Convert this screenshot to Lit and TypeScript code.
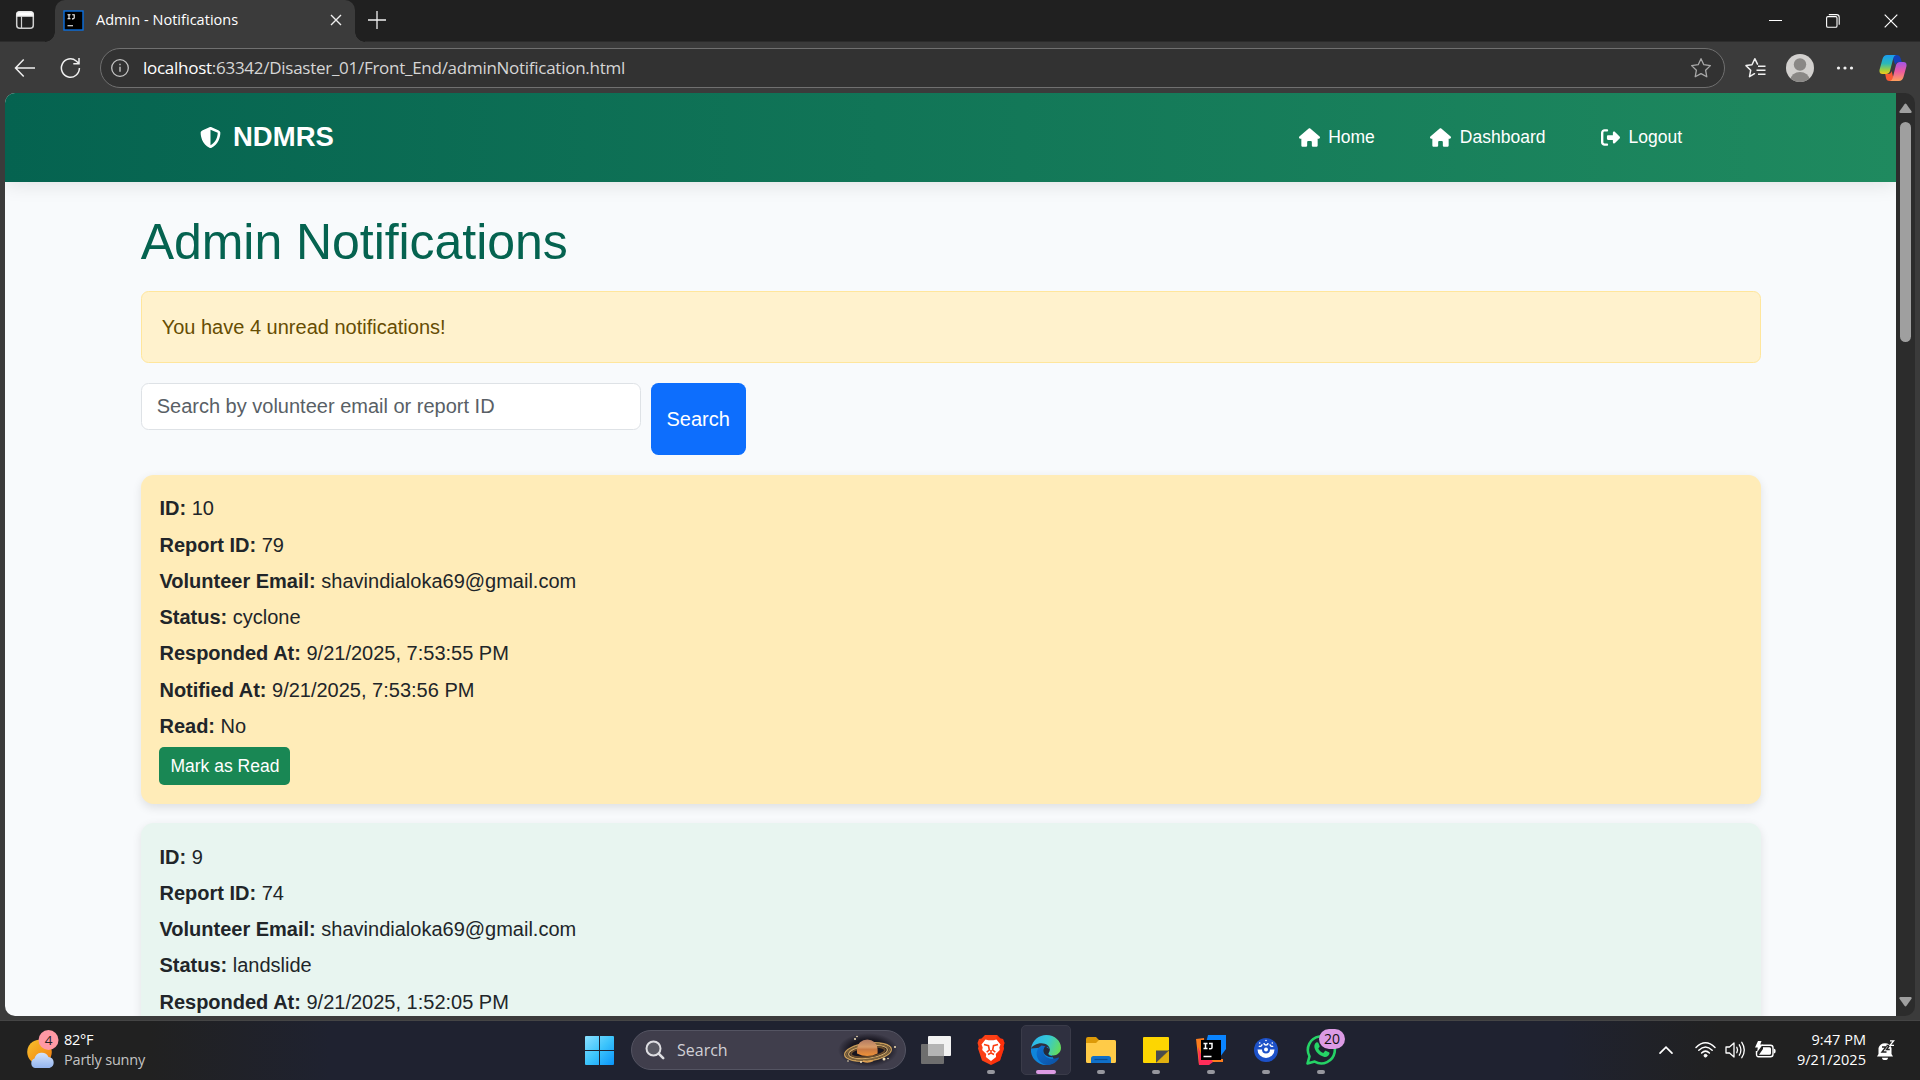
import { LitElement, html, svg, css } from "lit";
import { customElement, property } from "lit/decorators.js";

interface Notice {
  unread: boolean;
  fields: [string, string][];
}

const NOTICES: Notice[] = [
  {
    unread: true,
    fields: [
      ["ID:", "10"],
      ["Report ID:", "79"],
      ["Volunteer Email:", "shavindialoka69@gmail.com"],
      ["Status:", "cyclone"],
      ["Responded At:", "9/21/2025, 7:53:55 PM"],
      ["Notified At:", "9/21/2025, 7:53:56 PM"],
      ["Read:", "No"],
    ],
  },
  {
    unread: false,
    fields: [
      ["ID:", "9"],
      ["Report ID:", "74"],
      ["Volunteer Email:", "shavindialoka69@gmail.com"],
      ["Status:", "landslide"],
      ["Responded At:", "9/21/2025, 1:52:05 PM"],
    ],
  },
];

const HOUSE =
  "M575.8 255.5c0 18-15 32.1-32 32.1l-32 0 .7 160.2c0 2.7-.2 5.4-.5 8.1l0 16.2c0 22.1-17.9 40-40 40l-16 0c-1.1 0-2.2 0-3.3-.1c-1.4 .1-2.8 .1-4.2 .1L416 512l-24 0c-22.1 0-40-17.9-40-40l0-24 0-64c0-17.7-14.3-32-32-32l-64 0c-17.7 0-32 14.3-32 32l0 64 0 24c0 22.1-17.9 40-40 40l-24 0-31.9 0c-1.5 0-3-.1-4.5-.2c-1.2 .1-2.4 .2-3.6 .2l-16 0c-22.1 0-40-17.9-40-40l0-112c0-.9 0-1.9 .1-2.8l0-69.7-32 0c-18 0-32-14-32-32.1c0-9 3-17 10-24L266.4 8c7-7 15-8 22-8s15 2 21 7L564.8 231.5c8 7 12 15 11 24z";
const SHIELD =
  "M256 0c4.6 0 9.2 1 13.4 2.9L457.7 82.8c22 9.3 38.4 31 38.3 57.2c-.5 99.2-41.3 280.7-213.6 363.2c-16.7 8-36.1 8-52.8 0C57.3 420.7 16.5 239.2 16 140c-.1-26.2 16.3-47.9 38.3-57.2L242.7 2.9C246.8 1 251.4 0 256 0zm0 66.8l0 378.1C394 378 431.1 230.1 432 141.4L256 66.8z";
const LOGOUT =
  "M377.9 105.9L500.7 228.7c7.2 7.2 11.3 17.1 11.3 27.3s-4.1 20.1-11.3 27.3L377.9 406.1c-6.4 6.4-15 9.9-24 9.9c-18.7 0-33.9-15.2-33.9-33.9l0-62.1-128 0c-17.7 0-32-14.3-32-32l0-64c0-17.7 14.3-32 32-32l128 0 0-62.1c0-18.7 15.2-33.9 33.9-33.9c9 0 17.6 3.6 24 9.9zM160 96L96 96c-17.7 0-32 14.3-32 32l0 256c0 17.7 14.3 32 32 32l64 0c17.7 0 32 14.3 32 32s-14.3 32-32 32l-64 0c-53 0-96-43-96-96L0 128C0 75 43 32 96 32l64 0c17.7 0 32 14.3 32 32s-14.3 32-32 32z";

@customElement("browser-chrome")
class BrowserChrome extends LitElement {
  static styles = css`
    :host {
      display: block;
      height: 93px;
      background: #3b3b3b;
      color: #fff;
      font-family: "Open Sans", "Noto Sans", sans-serif;
    }
    svg {
      display: block;
      flex: none;
      fill: none;
      stroke: #f0f0f0;
      stroke-width: 1.5;
    }
    .strip {
      height: 42px;
      display: flex;
      align-items: stretch;
      background: #202020;
      box-sizing: border-box;
      border-bottom: 1px solid #2c2c2c;
    }
    .panel {
      width: 55px;
      display: flex;
      align-items: center;
      padding: 0 0 2px 15px;
      box-sizing: border-box;
    }
    .tab {
      position: relative;
      width: 300px;
      height: 42px;
      box-sizing: border-box;
      padding: 0 13px 2px 8px;
      display: flex;
      align-items: center;
      background: #3b3b3b;
      border-radius: 10px 10px 0 0;
    }
    .tab::before,
    .tab::after {
      content: "";
      position: absolute;
      bottom: 0;
      width: 10px;
      height: 10px;
    }
    .tab::before {
      left: -10px;
      background: radial-gradient(circle at 0 0, #202020 9.5px, #3b3b3b 10px);
    }
    .tab::after {
      right: -10px;
      background: radial-gradient(circle at 100% 0, #202020 9.5px, #3b3b3b 10px);
    }
    .title {
      flex: 1;
      margin-left: 12px;
      padding-bottom: 1px;
      font-size: 14.5px;
      letter-spacing: 0.03px;
      white-space: nowrap;
    }
    .plus {
      margin: 11px 0 0 13px;
    }
    .window {
      margin-left: auto;
      display: flex;
      align-items: center;
      gap: 44px;
      padding: 1px 22px 0 0;
    }
    .bar {
      height: 51px;
      display: flex;
      align-items: center;
      box-sizing: border-box;
      padding: 0 13px 0 14px;
    }
    .refresh {
      margin: 0 19px 0 24px;
    }
    .address {
      width: 1625px;
      height: 40px;
      box-sizing: border-box;
      border: 1px solid #707070;
      border-radius: 20px;
      background: #323232;
      display: flex;
      align-items: center;
      padding: 0 12px 0 9px;
    }
    .url {
      flex: 1;
      margin-left: 13px;
      font-size: 17px;
      letter-spacing: -0.27px;
      color: #d6d6d6;
      white-space: nowrap;
    }
    .url b {
      font-weight: 400;
      color: #fff;
    }
    .fav {
      margin: 0 20px 0 19px;
    }
    .dots {
      margin: 0 25px 0 22px;
    }
  `;

  render() {
    return html`
      <div class="strip">
        <div class="panel">
          <svg width="20" height="20" viewBox="0 0 20 20">
            <rect x="1.7" y="1.7" width="16.6" height="16.6" rx="3" stroke="#cfcfcf" />
            <path d="M2 4.2A2.5 2.5 0 0 1 4.5 2h11A2.5 2.5 0 0 1 18 4.2V6H2z" fill="#fff" />
            <path d="M6.5 6v12" stroke="#cfcfcf" stroke-width="1.2" />
          </svg>
        </div>
        <div class="tab">
          <svg width="21" height="21" viewBox="0 0 21 21">
            <rect x="1" y="1" width="19" height="19" fill="#000" stroke="#0a6fe0" stroke-width="1.4" />
            <path d="M4.5 4.7h3M6 4.7v4M4.5 8.7h3M9.2 4.7h2v3q0 1.2-1.4 1.2H9M4.5 15.7h5.5" stroke="#fff" stroke-width="1.1" />
          </svg>
          <span class="title">Admin - Notifications</span>
          <svg width="12" height="12" viewBox="0 0 12 12"><path d="M1 1l10 10M11 1L1 11" stroke-width="1.4" /></svg>
        </div>
        <svg class="plus" width="18" height="18" viewBox="0 0 18 18"><path d="M9 0v18M0 9h18" stroke-width="1.3" /></svg>
        <div class="window">
          <svg width="13" height="14" viewBox="0 0 13 14"><path d="M0 6.5h13" stroke="#fff" stroke-width="1" /></svg>
          <svg width="14" height="14" viewBox="0 0 14 14">
            <rect x=".6" y="2.6" width="10.4" height="10.6" rx="1.3" stroke="#fff" stroke-width="1.1" />
            <path d="M2.8.6h7.7q2.7 0 2.7 2.6v7.5" stroke="#fff" stroke-width="1.1" />
          </svg>
          <svg width="14" height="14" viewBox="0 0 14 14"><path d="M.7.7l12.6 12.6M13.3.7L.7 13.3" stroke="#fff" stroke-width="1.2" /></svg>
        </div>
      </div>
      <div class="bar">
        <svg width="22" height="20" viewBox="0 0 22 20"><path d="M9.7 1.5L1.5 10l8.2 8.5M1.7 10H21" /></svg>
        <svg class="refresh" width="21" height="22" viewBox="0 0 21 22">
          <path d="M19.4 11a9 9.2 0 1 1-3.2-7L19 6.5M19 1v5.7h-5.7" />
        </svg>
        <div class="address">
          <svg width="20" height="20" viewBox="0 0 20 20">
            <circle cx="10" cy="10" r="8.3" stroke="#c4c4c4" stroke-width="1.3" />
            <path d="M10 8.8v5M10 5.8v1.5" stroke="#c4c4c4" stroke-width="1.4" />
          </svg>
          <span class="url"><b>localhost</b>:63342/Disaster_01/Front_End/adminNotification.html</span>
          <svg width="22" height="22" viewBox="0 0 22 22">
            <path d="M11 1.7l2.8 6 6.6.9-4.8 4.6 1.2 6.6L11 16.6l-5.8 3.2 1.2-6.6L1.6 8.600l6.6-.9z" stroke="#a8a8a8" stroke-width="1.3" stroke-linejoin="round" />
          </svg>
        </div>
        <svg class="fav" width="22" height="22" viewBox="0 0 22 22">
          <path d="M10.500 16.700l-5 3 1.200-6.500L2 8.600l6-.9 2.800-6 2.700 5.500" stroke-linejoin="round" stroke-linecap="round" />
          <path d="M14 9.300h7.500M12.500 13.300h9M14 17.300h7.500" />
        </svg>
        <svg width="28" height="28" viewBox="0 0 28 28" stroke="none">
          <defs><clipPath id="face"><circle cx="14" cy="14" r="14" /></clipPath></defs>
          <g clip-path="url(#face)" stroke="none">
            <rect width="28" height="28" fill="#d2d0ce" />
            <circle cx="14" cy="10.500" r="6.200" fill="#8a8886" />
            <ellipse cx="14" cy="26" rx="9.500" ry="8" fill="#8a8886" />
          </g>
        </svg>
        <svg class="dots" width="18" height="6" viewBox="0 0 18 6">
          <g fill="#f0f0f0" stroke="none"><circle cx="2.500" cy="3" r="1.600" /><circle cx="9" cy="3" r="1.600" /><circle cx="15.500" cy="3" r="1.600" /></g>
        </svg>
        <svg width="28" height="28" viewBox="0 0 28 28">
          <defs>
            <linearGradient id="cpA" x1="0" y1="0" x2="0" y2="1">
              <stop offset="0" stop-color="#1a9cf0" /><stop offset=".45" stop-color="#2bb8b8" /><stop offset=".8" stop-color="#a5cf3a" /><stop offset="1" stop-color="#f4c81c" />
            </linearGradient>
            <linearGradient id="cpB" x1="0" y1="0" x2="0" y2="1">
              <stop offset="0" stop-color="#a155e8" /><stop offset=".5" stop-color="#ec5aa0" /><stop offset="1" stop-color="#ffa05c" />
            </linearGradient>
          </defs>
          <g stroke="none">
            <path d="M13 1h4.500q3 0 4 3l1.300 4h-3q-2.700 0-3.600 3z" fill="#1340b8" />
            <path d="M15 27h-4.500q-3 0-3.500-3l-.8-4h3q2.700 0 3.500-3z" fill="#f85a34" />
            <path d="M8 1h9q-2 .6-2.700 3L11 17q-1 3-4 3H3.500Q-.2 20 .6 15.500L3.500 5Q4.700 1 8 1z" fill="url(#cpA)" />
            <path d="M20 27h-9q2-.6 2.700-3L17 11q1-3 4-3h3.500q3.700 0 2.900 4.500L24.500 23q-1.200 4-4.500 4z" fill="url(#cpB)" />
          </g>
        </svg>
      </div>
    `;
  }
}

@customElement("notice-card")
class NoticeCard extends LitElement {
  @property({ attribute: false }) notice!: Notice;

  static styles = css`
    :host {
      display: block;
      margin-bottom: 18.75px;
    }
    .card {
      padding: 18.75px;
      border-radius: 12.500px;
      background: #e8f5f0;
      box-shadow: 0 3.750px 10px rgba(0, 0, 0, 0.1);
    }
    .card.unread {
      background: #ffecb8;
    }
    p {
      margin: 0 0 6.250px;
      line-height: 30px;
    }
    button {
      display: block;
      height: 38.250px;
      padding: 0 11px;
      border: 0;
      border-radius: 5px;
      background: #198754;
      color: #fff;
      font: 17.500px/37.500px "Liberation Sans", Arial, sans-serif;
    }
  `;

  render() {
    const { unread, fields } = this.notice;
    return html`
      <div class="card ${unread ? "unread" : ""}">
        ${fields.map(([label, value]) => html`<p><strong>${label}</strong> ${value}</p>`)}
        ${unread ? html`<button>Mark as Read</button>` : ""}
      </div>
    `;
  }
}

@customElement("admin-page")
class AdminPage extends LitElement {
  static styles = css`
    :host {
      display: flex;
      height: 923px;
      margin: 0 5px;
      overflow: hidden;
      border-radius: 10px;
      background: #2c2c2c;
      font: 20px/30px "Liberation Sans", Arial, sans-serif;
      color: #212529;
    }
    .view {
      width: 1891px;
      height: 923px;
      overflow: hidden;
      background: #f8fafc;
    }
    nav {
      position: relative;
      height: 89px;
      box-sizing: border-box;
      padding: 0 214px 1px 195px;
      display: flex;
      align-items: center;
      justify-content: space-between;
      background: linear-gradient(90deg, #056350, #1f8a5f);
      box-shadow: 0 2.500px 19px rgba(0, 0, 0, 0.1);
      color: #fff;
    }
    nav svg {
      display: block;
      fill: #fff;
    }
    .brand {
      display: flex;
      align-items: center;
      gap: 12px;
      font-size: 27.500px;
      font-weight: 700;
    }
    .links {
      display: flex;
      gap: 55.500px;
      font-size: 17.500px;
    }
    .links a {
      display: flex;
      align-items: center;
      gap: 8.500px;
    }
    .container {
      width: 1620px;
      margin-left: 135.700px;
      padding-top: 29.700px;
    }
    h1 {
      margin: 0 0 19px;
      font-size: 50px;
      line-height: 60px;
      font-weight: 400;
      letter-spacing: -0.050px;
      color: #056350;
    }
    .alert {
      height: 72px;
      box-sizing: border-box;
      padding: 20px;
      border: 1px solid #ffe69c;
      border-radius: 7.500px;
      background: #fff2cd;
      color: #664d03;
      margin-bottom: 20px;
    }
    .search {
      display: flex;
      align-items: flex-start;
      gap: 10px;
      margin-bottom: 20px;
    }
    input {
      width: 500px;
      height: 47px;
      box-sizing: border-box;
      padding: 0 15px;
      border: 1px solid #dee2e6;
      border-radius: 7.500px;
      background: #fff;
      font: inherit;
    }
    input::placeholder {
      color: #595f66;
      opacity: 1;
    }
    .search button {
      width: 95px;
      height: 72px;
      padding: 0;
      border: 0;
      border-radius: 7.500px;
      background: #0d6efd;
      color: #fff;
      font: inherit;
    }
    .scroll {
      width: 19px;
      display: flex;
      flex-direction: column;
      align-items: center;
      padding: 10px 0 9px;
      box-sizing: border-box;
    }
    .scroll svg {
      display: block;
      fill: #9f9f9f;
    }
    .thumb {
      width: 11px;
      height: 220px;
      margin: 9px 0 auto;
      border-radius: 6px;
      background: #9f9f9f;
    }
  `;

  render() {
    return html`
      <div class="view">
        <nav>
          <div class="brand">
            <svg width="21" height="21" viewBox="0 0 512 512"><path d=${SHIELD} /></svg>
            <span>NDMRS</span>
          </div>
          <div class="links">
            <a><svg width="21" height="19" viewBox="0 0 576 512"><path d=${HOUSE} /></svg>Home</a>
            <a><svg width="21" height="19" viewBox="0 0 576 512"><path d=${HOUSE} /></svg>Dashboard</a>
            <a><svg width="19" height="19" viewBox="0 0 512 512"><path d=${LOGOUT} /></svg>Logout</a>
          </div>
        </nav>
        <div class="container">
          <h1>Admin Notifications</h1>
          <div class="alert">You have 4 unread notifications!</div>
          <div class="search">
            <input placeholder="Search by volunteer email or report ID" />
            <button>Search</button>
          </div>
          ${NOTICES.map((n) => html`<notice-card .notice=${n}></notice-card>`)}
        </div>
      </div>
      <div class="scroll">
        <svg width="13" height="10" viewBox="0 0 13 10"><path d="M5.500 1.200q1-1.400 2 0l5 7q.7 1.800-1 1.800h-10q-1.700 0-1-1.800z" /></svg>
        <div class="thumb"></div>
        <svg width="13" height="10" viewBox="0 0 13 10"><path d="M5.500 8.800q1 1.400 2 0l5-7q.7-1.800-1-1.800h-10q-1.700 0-1 1.800z" /></svg>
      </div>
    `;
  }
}

const brave = svg`
  <path d="M9 0h12l3.500 3.500 2.500.5 1.500 4-1 3.500 .5 2-4 12L15 30 6 25.500l-4-12 .5-2-1-3.500L3 4l2.500-.5z" fill="#fb4016" />
  <path d="M21 0l3.500 3.500L27 4l1.500 4-1 3.500.5 2-4 12L15 30z" fill="#ff2000" opacity=".5" />
  <path d="M9.500 4.500l3 .8h5l3-.8 4 5-1.200 3 .5 2.500-4 4 .3 3L15 26l-5.100-4 .3-3-4-4 .5-2.500-1.200-3z" fill="#fff" />
  <path d="M8 9.500l4.500 1.200.8 4.300-2.600 2.200M22 9.500l-4.500 1.200-.8 4.300 2.600 2.200M12 19.500l3-1.500 3 1.500M15 15v3" fill="none" stroke="#fb4016" stroke-width="1.600" />`;

const edge = svg`
  <defs>
    <linearGradient id="eTop" x1="0" y1=".3" x2="1" y2=".6"><stop offset="0" stop-color="#2bb4ee" /><stop offset=".5" stop-color="#35c8d6" /><stop offset="1" stop-color="#65dd5a" /></linearGradient>
    <linearGradient id="eLow" x1="0" y1="0" x2="1" y2="1"><stop offset="0" stop-color="#0d72d4" /><stop offset="1" stop-color="#0c4fa0" /></linearGradient>
  </defs>
  <path d="M0 13.500a15 15 0 0 0 15 16.500q5 0 9-3L17 12z" fill="#0f86dc" />
  <path d="M0 13.500C1.500 5 8 0 15.300 0 24 0 30 6.200 30 12.800c0 4.700-3.800 7.700-8 7.700-3 0-4.600-1.200-4.600-2.200 0-.8 1.300-1.500 1.300-4 0-3.200-3.600-6-8.200-6C5.500 8.300 1.300 11 0 13.500z" fill="url(#eTop)" />
  <path d="M10.600 10.500c-3.600 2-5.300 5.300-5 9 .5 5.700 5.400 10.200 10.800 10.500 4.600-.1 9-2.600 11.300-6.300.6-1-.1-1.500-1-1-6.500 3-14.600-.4-14.600-7 0-2 1-3.700 2.500-4.500z" fill="url(#eLow)" />
  <path d="M14.500 11.500c-3 2-2.800 6.500.2 8.800 2.500 1.900 6 2.400 9 1.500-3.300-.5-6.800-1.300-6.300-3.500.8-1 1.300-2 1.300-4z" fill="#252a3b" />`;

const folder = svg`
  <path d="M0 4q0-2 2-2h8l3 3h15q2 0 2 2v4H0z" fill="#dd9a08" />
  <path d="M0 8h10l3-3h15q2 0 2 2v19.500q0 1.500-1.500 1.500h-27Q0 28 0 26.500z" fill="#ffcb48" />
  <path d="M5 28v-4.500q0-2.500 2.500-2.500h15q2.500 0 2.500 2.500V28z" fill="#1070c8" />
  <path d="M8.500 24.500h13" stroke="#0a4d92" stroke-width="1.200" />`;

const notes = svg`
  <path d="M3 2h24q1 0 1 1v12L15.500 28H3q-1 0-1-1V3q0-1 1-1z" fill="#fdd601" />
  <path d="M15 28V15.500h13z" fill="#4b4b4d" /><path d="M15 28L28 15.500V27q0 1-1 1z" fill="#e0b010" />`;

const idea = svg`
  <path d="M0 4l8-1 1 22-6 5z" fill="#fb7d1e" />
  <path d="M12 0h18v14l-6 8-14-14z" fill="#0a84ff" />
  <path d="M2 12l5 12h14l-8 6H3z" fill="#ff2d5a" />
  <path d="M15 24h12v3H17z" fill="#fb7d1e" />
  <rect x="5" y="5" width="20" height="20" fill="#000" />
  <path d="M7.500 8.500h4M9.500 8.500v5M7.500 13.500h4M13 8.500h3v4q0 1.300-1.500 1.300h-1.500M7.500 21.500h8" fill="none" stroke="#fff" stroke-width="1.500" />`;

const orb = svg`
  <circle cx="15" cy="15" r="12" fill="#1d51c8" />
  <path d="M6.500 14.500h4.500a4 4 0 0 0 8 0h4.500a8.500 8.500 0 0 1-17 0z" fill="#fff" />
  <circle cx="15" cy="14.500" r="2" fill="#fff" />
  <path d="M7.800 11.200a2.200 2.200 0 0 0 3.200-2M13 8a2 2 0 0 0 4 0M19 9.200a2.200 2.200 0 0 0 3.200 2" fill="none" stroke="#fff" stroke-width="1.300" />
  <g fill="#fff"><circle cx="8.700" cy="8" r=".8" /><circle cx="15" cy="5.500" r=".8" /><circle cx="21.300" cy="8" r=".8" /></g>`;

const whatsapp = svg`
  <path d="M1.500 28.500l2-7.200A13.500 13.500 0 1 1 8.700 26.600z" fill="none" stroke="#25d366" stroke-width="2.600" stroke-linejoin="round" />
  <path d="M10.300 7.500c.8-.4 1.700-.2 2.100.6l1.200 2.800c.2.600-.1 1.100-1.300 2.500 1 2 2.600 3.600 5 4.600l1.500-1.800c.4-.5.9-.5 1.400-.3l2.700 1.300c.6.300.7.800.5 1.600-.6 2.500-3.300 3.600-5.600 2.900-5-1.500-8.600-5.200-9.400-9.400-.3-2 .5-4 1.900-4.800z" fill="#25d366" />`;

@customElement("task-bar")
class TaskBar extends LitElement {
  static styles = css`
    :host {
      display: grid;
      grid-template-columns: 580px 1fr 300px;
      height: 59px;
      background: linear-gradient(90deg, #212121 0, #212121 150px, #1f2230 330px, #1f2230 1560px, #212121 1720px);
      color: #fff;
      font: 14.500px/20px "Open Sans", "Noto Sans", sans-serif;
    }
    svg {
      display: block;
      flex: none;
      overflow: visible;
    }
    .weather {
      display: flex;
      align-items: center;
      gap: 9px;
      padding: 0 0 1px 27px;
      white-space: nowrap;
    }
    .weather svg {
      margin-bottom: 3px;
    }
    .weather .sub {
      color: #c4c4c4;
    }
    .temp {
      letter-spacing: -0.300px;
    }
    .sub {
      letter-spacing: -0.200px;
    }
    .center {
      display: flex;
      align-items: center;
      padding: 0 0 1px 5px;
    }
    .pill {
      width: 275px;
      height: 40px;
      box-sizing: border-box;
      margin: 0 15px 0 17px;
      padding: 0 10px 0 13px;
      border: 1px solid #545462;
      border-radius: 20px;
      background: #403e4c;
      display: flex;
      align-items: center;
      font-size: 16px;
      color: #d0d0d6;
    }
    .pill span {
      flex: 1;
      margin-left: 12px;
    }
    .apps {
      display: flex;
      gap: 5px;
      margin-left: 15px;
    }
    .app {
      position: relative;
      width: 50px;
      height: 50px;
      box-sizing: border-box;
      border: 1px solid transparent;
      border-radius: 5px;
      display: flex;
      align-items: center;
      justify-content: center;
    }
    .app.active {
      background: #2f3040;
      border-color: #3a3b49;
    }
    .app::after {
      content: "";
      position: absolute;
      left: 20px;
      bottom: 0;
      width: 8px;
      height: 4px;
      border-radius: 2px;
      background: #96979e;
    }
    .app.active::after {
      left: 14px;
      width: 20px;
      background: #dc9be4;
    }
    .count {
      position: absolute;
      left: 22px;
      top: 3px;
      width: 26px;
      height: 20px;
      border-radius: 10px;
      background: #dc9be4;
      color: #111;
      text-align: center;
      font-size: 14px;
    }
    .tray {
      display: flex;
      align-items: center;
      padding: 0 0 2px 39px;
    }
    .clock {
      width: 80px;
      margin: 0 11px 0 10px;
      text-align: right;
      letter-spacing: 0.050px;
      white-space: nowrap;
    }
    .wifi {
      margin: 0 9px 0 22px;
    }
    .vol {
      margin-right: 9px;
    }
  `;

  private app(art: unknown, active = false, count = "") {
    return html`<div class="app ${active ? "active" : ""}">
      <svg width="30" height="30" viewBox="0 0 30 30">${art}</svg>
      ${count ? html`<span class="count">${count}</span>` : ""}
    </div>`;
  }

  render() {
    return html`
      <div class="weather">
        <svg width="28" height="38" viewBox="0 0 28 38">
          <defs>
            <linearGradient id="sun" x1="0" y1="0" x2="1" y2="1"><stop offset="0" stop-color="#f8c22c" /><stop offset="1" stop-color="#f07a10" /></linearGradient>
            <linearGradient id="cloud" x1="0" y1="0" x2="0" y2="1"><stop offset="0" stop-color="#d4e4fc" /><stop offset="1" stop-color="#93b4ee" /></linearGradient>
          </defs>
          <circle cx="12.500" cy="22" r="12.300" fill="url(#sun)" />
          <path d="M8 38a5 5 0 0 1-.5-9.500A7.500 7.500 0 0 1 21.500 27 5.600 5.600 0 0 1 22.500 38z" fill="url(#cloud)" />
          <circle cx="21.500" cy="10" r="10" fill="#ff99a4" />
          <text x="21.500" y="15" text-anchor="middle" font-size="13.500" fill="#222">4</text>
        </svg>
        <div>
          <div class="temp">82°F</div>
          <div class="sub">Partly sunny</div>
        </div>
      </div>
      <div class="center">
        <svg width="29" height="29" viewBox="0 0 29 29">
          <defs>
            <linearGradient id="win" x1="0" y1="0" x2="1" y2="1"><stop offset="0" stop-color="#8be0ff" /><stop offset=".5" stop-color="#3cc4fb" /><stop offset="1" stop-color="#0a94f8" /></linearGradient>
          </defs>
          <path d="M1 0h13v14H0V1q0-1 1-1zM15 0h13q1 0 1 1v13H15zM0 15h14v14H1q-1 0-1-1zM15 15h14v13q0 1-1 1H15z" fill="url(#win)" />
        </svg>
        <div class="pill">
          <svg width="20" height="20" viewBox="0 0 20 20" fill="none" stroke="#dedee2">
            <circle cx="8.500" cy="8.500" r="7" stroke-width="2" fill="#5a5a64" /><path d="M13.700 13.700l4.500 4.500" stroke-width="2.600" stroke-linecap="round" />
          </svg>
          <span>Search</span>
          <svg width="54" height="32" viewBox="0 0 54 32">
            <defs>
              <radialGradient id="sky"><stop offset=".6" stop-color="#17151f" /><stop offset="1" stop-color="#17151f" stop-opacity="0" /></radialGradient>
              <linearGradient id="planet" x1="0" y1="0" x2="0" y2="1"><stop offset="0" stop-color="#b07a62" /><stop offset=".45" stop-color="#d89a68" /><stop offset=".6" stop-color="#c87a44" /><stop offset="1" stop-color="#f09238" /></linearGradient>
            </defs>
            <ellipse cx="27" cy="16" rx="30" ry="17" fill="url(#sky)" />
            <g transform="rotate(-7 27 18)" fill="none">
              <ellipse cx="27" cy="18" rx="23.500" ry="8.800" stroke="#c89c58" stroke-width="1.400" />
              <ellipse cx="27" cy="18" rx="21.500" ry="7.400" stroke="#80643c" stroke-width="1.600" />
              <ellipse cx="27" cy="18" rx="19.500" ry="6.200" stroke="#d0a868" stroke-width="1.300" />
              <ellipse cx="27" cy="18" rx="17" ry="5" stroke="#6a4c2c" stroke-width="1.800" />
            </g>
            <path d="M16 19.500V15a10.300 9.500 0 0 1 20.600 0v4.500Q26 24.500 16 19.500z" fill="url(#planet)" />
            <path d="M22 27q5 2 10-.5" fill="none" stroke="#e0a050" stroke-width="1.500" />
            <g fill="#f4e2b8"><circle cx="14" cy="5" r="1" /><circle cx="16" cy="2.500" r=".8" /><circle cx="54" cy="13" r="1" /><circle cx="43" cy="25" r="1.500" /><circle cx="47" cy="24.500" r=".8" /><circle cx="20" cy="28" r="1" /><circle cx="7" cy="27" r=".8" /></g>
          </svg>
        </div>
        <svg width="30" height="28" viewBox="0 0 30 28">
          <rect x="7" y="0" width="23" height="20" rx="1" fill="#f2f2f2" />
          <rect x="0" y="8" width="23" height="20" rx="1" fill="#6e6e6e" />
          <rect x="7" y="8" width="16" height="12" fill="#b4b4b4" />
        </svg>
        <div class="apps">
          ${this.app(brave)}${this.app(edge, true)}${this.app(folder)}${this.app(notes)}${this.app(idea)}${this.app(orb)}${this.app(whatsapp, false, "20")}
        </div>
      </div>
      <div class="tray">
        <svg width="14" height="8" viewBox="0 0 14 8"><path d="M1 7.200L7 1.200l6 6" fill="none" stroke="#fff" stroke-width="1.700" stroke-linecap="round" /></svg>
        <svg class="wifi" width="21" height="17" viewBox="0 0 21 17" fill="none" stroke="#fff" stroke-width="1.500" stroke-linecap="round">
          <path d="M1 6.500q9.500-9.500 19 0M3.800 9.300q6.700-6.600 13.400 0M6.600 12q3.900-3.800 7.800 0" /><circle cx="10.500" cy="14.700" r="1.400" fill="#fff" stroke-width="1" />
        </svg>
        <svg class="vol" width="21" height="18" viewBox="0 0 21 18" fill="none" stroke="#fff" stroke-width="1.300" stroke-linejoin="round" stroke-linecap="round">
          <path d="M1 6h3.500L9 2v14l-4.500-4H1zM11.800 6.300q1.600 2.700 0 5.400M14.300 3.800q3.200 5.200 0 10.400M16.800 1.300q5 7.700 0 15.400" />
        </svg>
        <svg width="21" height="18" viewBox="0 0 21 18">
          <path d="M7 4.200h8.500q2.500 0 2.500 2.500v6.600q0 2.500-2.500 2.500h-12Q1.500 15.800 1.500 13.300V10" fill="none" stroke="#fff" stroke-width="1.400" />
          <path d="M8 6.300h6.500q1.500 0 1.500 1.500v4.400q0 1.500-1.500 1.500H4L8 8z" fill="#fff" />
          <path d="M18.700 7.500q2 0 2 2.500t-2 2.500z" fill="#fff" />
          <path d="M3 0h3.500L5.300 3.500h2.500L2 11.500l.8-5H0z" fill="#fff" />
        </svg>
        <div class="clock">
          <div>9:47 PM</div>
          <div>9/21/2025</div>
        </div>
        <svg width="18" height="20" viewBox="0 0 18 20">
          <path d="M1.500 14V8a6.800 6.800 0 0 1 13 0v6l1.500 2.500H0z" fill="#fff" /><path d="M5 17.700h6a3 2.300 0 0 1-6 0z" fill="#fff" />
          <path d="M5 7h4l-4 5h4.500M9.500 5.500h3L9.500 9.500h3.300" fill="none" stroke="#212121" stroke-width="1.400" />
          <path d="M13 .9h3.600l-3.600 4.400h4" fill="none" stroke="#fff" stroke-width="1.300" />
        </svg>
      </div>
    `;
  }
}

@customElement("app-root")
class AppRoot extends LitElement {
  static styles = css`
    :host {
      display: flex;
      flex-direction: column;
      width: 1920px;
      height: 1080px;
      overflow: hidden;
      background: #3b3b3b;
    }
    .edge {
      height: 5px;
      box-sizing: border-box;
      border-bottom: 1px solid #454545;
    }
  `;

  render() {
    return html`
      <browser-chrome></browser-chrome>
      <admin-page></admin-page>
      <div class="edge"></div>
      <task-bar></task-bar>
    `;
  }
}
